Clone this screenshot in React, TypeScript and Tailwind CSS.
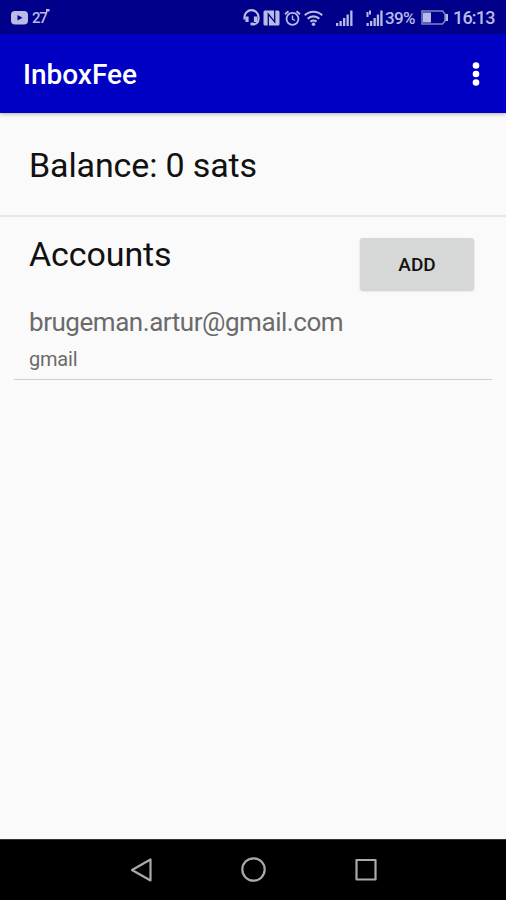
type Account = {
  email: string;
  provider: string;
};

const accounts: Account[] = [
  { email: "brugeman.artur@gmail.com", provider: "gmail" },
];

const StatusBar = () => (
  <div className="flex h-[34px] items-center bg-[#00008a] pt-px text-[17px] leading-[34px] text-[#b9bbe6]">
    <svg className="ml-[11px] h-[14px] w-[17px]" viewBox="0 0 17 14">
      <rect width="17" height="13.5" rx="4" fill="currentColor" />
      <path d="M6.500 4v5.500l5-2.750z" fill="#00008a" />
    </svg>
    <span className="ml-[4px] w-[13px] text-[15px] font-medium tracking-[-1.2px]">27</span>
    <svg className="mb-[13px] h-[4px] w-[5px]" viewBox="0 0 5 4">
      <path d="M1 0h3.500v2.500h-2l-1.500 1.500z" fill="currentColor" />
    </svg>

    {/* headset */}
    <svg className="ml-[193px] h-[17px] w-[17px]" viewBox="0 0 17 17" fill="none" stroke="currentColor">
      <path d="M1.500 10.500V8A7 6.800 0 0 1 15.500 8v2c0 3-2 5.300-5.500 5.300" strokeWidth="2.200" />
      <path d="M4 7.500v5.500M12.500 7.500v5.500" strokeWidth="3.200" />
      <path d="M7.500 15h3.500" strokeWidth="2.800" />
    </svg>
    {/* nfc */}
    <svg className="ml-[3px] h-[16px] w-[17px]" viewBox="0 0 17 16">
      <rect x="0.5" y="0.5" width="16" height="15" rx="1.500" fill="currentColor" />
      <path d="M5.300 16V4l6.400 8V0" fill="none" stroke="#00008a" strokeWidth="1.300" />
    </svg>
    {/* alarm */}
    <svg className="ml-[4px] h-[16px] w-[17px]" viewBox="0 0 17 16" fill="none" stroke="currentColor">
      <circle cx="8.500" cy="8.800" r="6" strokeWidth="1.800" />
      <path d="M8.500 5.500v3.500l2.500 1.500" strokeWidth="1.400" />
      <path d="M1 4.300 4.500 1.200M16 4.300l-3.500-3.100" strokeWidth="1.900" />
    </svg>
    {/* wifi */}
    <svg className="ml-[3px] h-[16px] w-[19px]" viewBox="0 0 19 16" fill="none" stroke="currentColor" strokeWidth="2.100">
      <path d="M.8 5.300a12.500 12.500 0 0 1 17.400 0" />
      <path d="M3.700 8.700a8.400 8.400 0 0 1 11.600 0" />
      <path d="M6.500 11.700a4.400 4.400 0 0 1 6 0" />
      <circle cx="9.500" cy="14.200" r="1.700" fill="currentColor" stroke="none" />
    </svg>
    {/* sim 1 */}
    <svg className="ml-[13px] h-[16px] w-[17px]" viewBox="0 0 17 16" fill="currentColor">
      <path d="M0 13h2.300v3H0zM3.500 11h2.300v5H3.500zM7 8h2.300v8H7zM10.500 4.500h2.300V16h-2.300zM14.200 0.500h2.300V16h-2.300z" />
    </svg>
    {/* sim 2 */}
    <svg className="ml-[13px] h-[16px] w-[17px]" viewBox="0 0 17 16" fill="currentColor">
      <path d="M0.500 13h2.300v3H0.500zM4 11h2.300v5H4zM7.500 8h2.300v8H7.500zM10.800 4.500h2.300V16h-2.300zM14.300 0.500h2.300V16h-2.300z" />
      <path d="M1.500 2v5M4 0.500v4" stroke="currentColor" strokeWidth="2" />
    </svg>
    <span className="ml-[2px] w-[32px] font-medium tracking-[-0.700px]">39%</span>
    <svg className="ml-[4px] h-[15px] w-[27px]" viewBox="0 0 27 15">
      <path d="M1 1h20.500l2.500 3v7l-2.500 3H1z" fill="none" stroke="currentColor" strokeWidth="1.500" opacity="0.700" />
      <path d="M2 2.500h8v10H2zM24.500 4H27v7h-2.500z" fill="currentColor" />
    </svg>
    <span className="ml-[5px] text-[18px] font-medium tracking-[-0.800px]">16:13</span>
  </div>
);

const AppBar = () => (
  <div className="relative flex h-[79px] items-center justify-between bg-[#0000c4] pr-[26px] pl-[23px] shadow-[0_1px_4px_rgba(0,0,0,0.3)]">
    <h1 className="pt-[3px] text-[28px] font-medium text-white">InboxFee</h1>
    <svg className="h-[26px] w-[8px]" viewBox="0 0 8 26" fill="white">
      <circle cx="4" cy="4.500" r="3.300" />
      <circle cx="4" cy="13" r="3.300" />
      <circle cx="4" cy="21.500" r="3.300" />
    </svg>
  </div>
);

const AccountRow = ({ account }: { account: Account }) => (
  <li className="mx-[14px] h-[83px] border-b-[1.5px] border-[#cfcfcf] px-[15px] text-[#6b6b6b]">
    <p className="pt-[8px] text-[26px] leading-[34px] tracking-[-0.460px]">{account.email}</p>
    <p className="pt-[7px] text-[20px] leading-[26px] tracking-[-0.200px]">{account.provider}</p>
  </li>
);

const NavBar = () => (
  <div className="flex h-[61px] items-center justify-center gap-[86px] border-t border-[#333] bg-black pl-[2px] text-[#aaa]">
    <svg className="h-[26px] w-[26px]" viewBox="0 0 26 26" fill="none" stroke="currentColor" strokeWidth="2.200" strokeLinejoin="round">
      <path d="M21.500 2.500v21L3 13z" />
    </svg>
    <svg className="h-[26px] w-[26px]" viewBox="0 0 26 26" fill="none" stroke="currentColor" strokeWidth="2.200">
      <circle cx="12.500" cy="12.500" r="11.200" />
    </svg>
    <svg className="h-[26px] w-[26px]" viewBox="0 0 26 26" fill="none" stroke="currentColor" strokeWidth="2.200" strokeLinejoin="round">
      <rect x="3.500" y="3" width="19" height="19.500" />
    </svg>
  </div>
);

const App = () => {
  return (
    <div className="flex h-[900px] w-[506px] flex-col bg-[#fafafa] font-[Roboto,sans-serif]">
      <StatusBar />
      <AppBar />
      <main className="flex-1 text-[#111]">
        <div className="flex h-[104px] items-center border-b-2 border-[#e8e8e8] pt-[3px] pl-[29px] text-[34px] tracking-[-0.130px]">
          Balance: 0 sats
        </div>
        <div className="flex h-[80px] items-start justify-between pr-[32px] pl-[29px]">
          <h2 className="pt-[15px] text-[34px] leading-[44px] tracking-[-0.100px]">Accounts</h2>
          <button className="mt-[21px] h-[52px] w-[114px] rounded-[3px] bg-[#d6d8d7] pt-[3px] text-[19px] font-medium shadow-[0_1px_2px_rgba(0,0,0,0.2)]">
            ADD
          </button>
        </div>
        <ul>
          {accounts.map((account) => (
            <AccountRow key={account.email} account={account} />
          ))}
        </ul>
      </main>
      <NavBar />
    </div>
  );
};

export default App;
